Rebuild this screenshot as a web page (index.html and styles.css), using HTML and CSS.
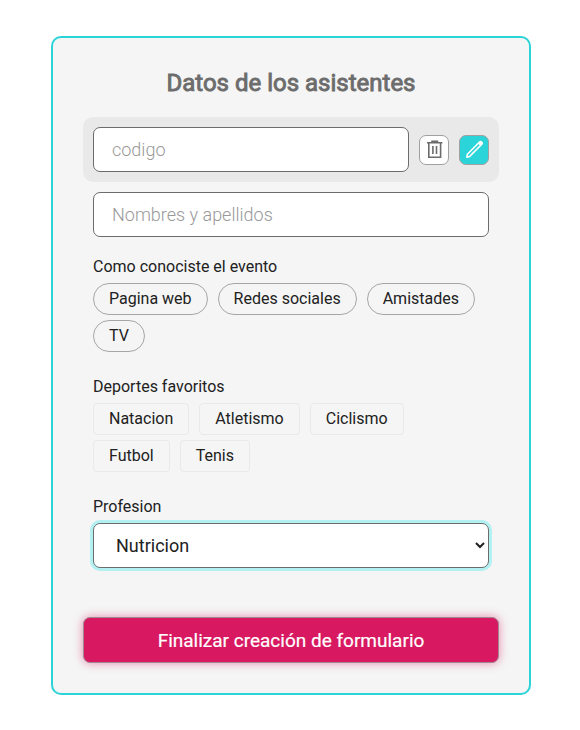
FILE: index.html
```html
<!DOCTYPE html>
<html lang="es">
<head>
<meta charset="utf-8">
<title>Datos de los asistentes</title>
<link rel="stylesheet" href="styles.css">
</head>
<body>
<main class="card">
  <h1 class="title">Datos de los asistentes</h1>
  <div class="row row-active">
    <input class="field" type="text" placeholder="codigo">
    <button class="tool" type="button" aria-label="Eliminar">
      <svg viewBox="0 0 28 28" width="28" height="28"><path d="M7 6.7h15.4M12 6V5.4h5.4V6M8.8 7v14.2h11.8V7M12.9 10v8M16.5 10v8" fill="none" stroke="#6c6c6c" stroke-width="1.6"/></svg>
    </button>
    <button class="tool tool-edit" type="button" aria-label="Editar">
      <svg viewBox="0 0 28 28" width="28" height="28"><path d="M6.9 21.2l.5-3L19.5 6q1-1 2 0l.3.3q1 1 0 2L9.7 20.4z" fill="none" stroke="#fff" stroke-width="1.6" stroke-linejoin="round"/><path d="M18 7.4l1.6-1.6q1-.9 2 0l.5.5q1 1 0 2l-1.6 1.6z" fill="#fff"/></svg>
    </button>
  </div>
  <div class="row"><input class="field" type="text" placeholder="Nombres y apellidos"></div>
  <section class="group">
    <p class="label">Como conociste el evento</p>
    <div class="options">
      <span class="pill">Pagina web</span><span class="pill">Redes sociales</span><span class="pill">Amistades</span><span class="pill">TV</span>
    </div>
  </section>
  <section class="group">
    <p class="label">Deportes favoritos</p>
    <div class="options">
      <span class="pill box">Natacion</span><span class="pill box">Atletismo</span><span class="pill box">Ciclismo</span><span class="pill box">Futbol</span><span class="pill box">Tenis</span>
    </div>
  </section>
  <section class="group">
    <p class="label">Profesion</p>
    <select class="field select"><option>Nutricion</option></select>
  </section>
  <button class="submit" type="button">Finalizar creación de formulario</button>
</main>
</body>
</html>
```
FILE: styles.css
```css
* { box-sizing: border-box; }
body { margin: 0; padding: 36px 0 0 51px; background: #fff; font-family: Roboto, sans-serif; color: #212121; }
.card { width: 480px; height: 659px; padding: 30px; border: 2px solid #2bd4d9; border-radius: 10px; background: #f5f5f5; }
.title { margin: 0 0 19px; font-size: 24px; line-height: 30px; font-weight: 400; -webkit-text-stroke: 0.9px #6c6c6c; text-align: center; color: #6c6c6c; }
.row { display: flex; align-items: center; gap: 10px; padding: 10px; border-radius: 10px; }
.row-active { background: #e9e9e9; }
.field { flex: 1; min-width: 0; width: 100%; height: 45px; padding: 0 18px; border: 1px solid #6c6c6c; border-radius: 7px; background: #fff; font: 300 18px Roboto, sans-serif; color: #212121; }
.field::placeholder { color: #999; }
.tool { display: flex; align-items: center; justify-content: center; width: 30px; height: 30px; padding: 0; border: 1px solid #a0a0a0; border-radius: 7px; background: #fff; }
.tool-edit { background: #2bd4d9; }
.group { padding: 10px 10px 0; height: 120px; }
.label { margin: 0 0 7px; font-size: 16px; line-height: 19px; }
.options { display: flex; flex-wrap: wrap; gap: 5px 10px; }
.pill { height: 32px; padding: 0 15px; border: 1px solid #a6a6a6; border-radius: 16px; font-size: 16px; line-height: 30px; }
.box { border-color: #e9e9e9; border-radius: 4px; }
.select { padding-right: 19px; font-weight: 400; box-shadow: 0 0 0 3px #b2f0f1; }
.submit { display: block; width: 100%; height: 46px; margin-top: 10px; border: 1px solid #a08a92; border-radius: 7px; background: #d81860; color: #fff; font: 400 19px Roboto, sans-serif; -webkit-text-stroke: 0.2px #fff; box-shadow: 0 0 10px #d8186080; }
```
